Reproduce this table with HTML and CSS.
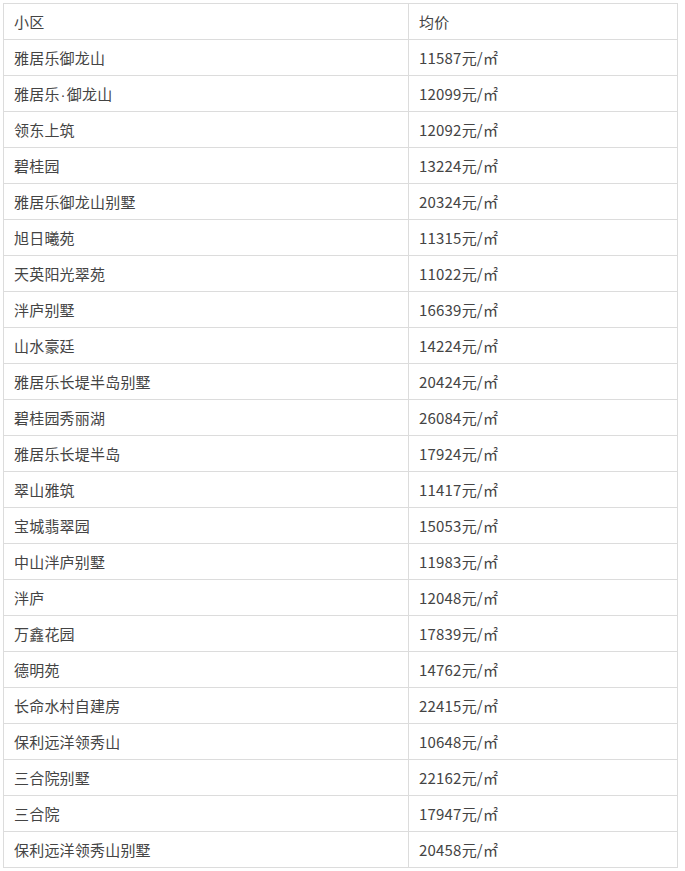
FILE: index.html
```html
<!DOCTYPE html>
<html lang="zh">
<head>
<meta charset="utf-8">
<link rel="stylesheet" href="styles.css">
</head>
<body>
<table class="price-table">
<tr><td class="name">小区</td><td class="price">均价</td></tr>
<tr><td class="name">雅居乐御龙山</td><td class="price">11587元/㎡</td></tr>
<tr><td class="name">雅居乐<span class="dot">·</span>御龙山</td><td class="price">12099元/㎡</td></tr>
<tr><td class="name">领东上筑</td><td class="price">12092元/㎡</td></tr>
<tr><td class="name">碧桂园</td><td class="price">13224元/㎡</td></tr>
<tr><td class="name">雅居乐御龙山别墅</td><td class="price">20324元/㎡</td></tr>
<tr><td class="name">旭日曦苑</td><td class="price">11315元/㎡</td></tr>
<tr><td class="name">天英阳光翠苑</td><td class="price">11022元/㎡</td></tr>
<tr><td class="name">泮庐别墅</td><td class="price">16639元/㎡</td></tr>
<tr><td class="name">山水豪廷</td><td class="price">14224元/㎡</td></tr>
<tr><td class="name">雅居乐长堤半岛别墅</td><td class="price">20424元/㎡</td></tr>
<tr><td class="name">碧桂园秀丽湖</td><td class="price">26084元/㎡</td></tr>
<tr><td class="name">雅居乐长堤半岛</td><td class="price">17924元/㎡</td></tr>
<tr><td class="name">翠山雅筑</td><td class="price">11417元/㎡</td></tr>
<tr><td class="name">宝城翡翠园</td><td class="price">15053元/㎡</td></tr>
<tr><td class="name">中山泮庐别墅</td><td class="price">11983元/㎡</td></tr>
<tr><td class="name">泮庐</td><td class="price">12048元/㎡</td></tr>
<tr><td class="name">万鑫花园</td><td class="price">17839元/㎡</td></tr>
<tr><td class="name">德明苑</td><td class="price">14762元/㎡</td></tr>
<tr><td class="name">长命水村自建房</td><td class="price">22415元/㎡</td></tr>
<tr><td class="name">保利远洋领秀山</td><td class="price">10648元/㎡</td></tr>
<tr><td class="name">三合院别墅</td><td class="price">22162元/㎡</td></tr>
<tr><td class="name">三合院</td><td class="price">17947元/㎡</td></tr>
<tr><td class="name">保利远洋领秀山别墅</td><td class="price">20458元/㎡</td></tr>
</table>
</body>
</html>
```
FILE: styles.css
```css
html, body {
  margin: 0;
  padding: 0;
  background: #fff;
}
body {
  padding: 3px;
  font-family: "Noto Sans CJK SC", "Noto Sans", sans-serif;
  font-size: 15px;
  color: #444;
}
.price-table {
  border-collapse: collapse;
  width: 675px;
  table-layout: fixed;
}
.price-table td {
  border: 1px solid #dcdcdc;
  height: 36px;
  padding: 1px 10px 0;
  box-sizing: border-box;
  vertical-align: middle;
  line-height: 20px;
  letter-spacing: 0.2px;
}
.price-table .name {
  width: 405px;
}
.price-table .dot {
  font-family: "Liberation Sans", sans-serif;
  padding: 0 1px;
}
```
